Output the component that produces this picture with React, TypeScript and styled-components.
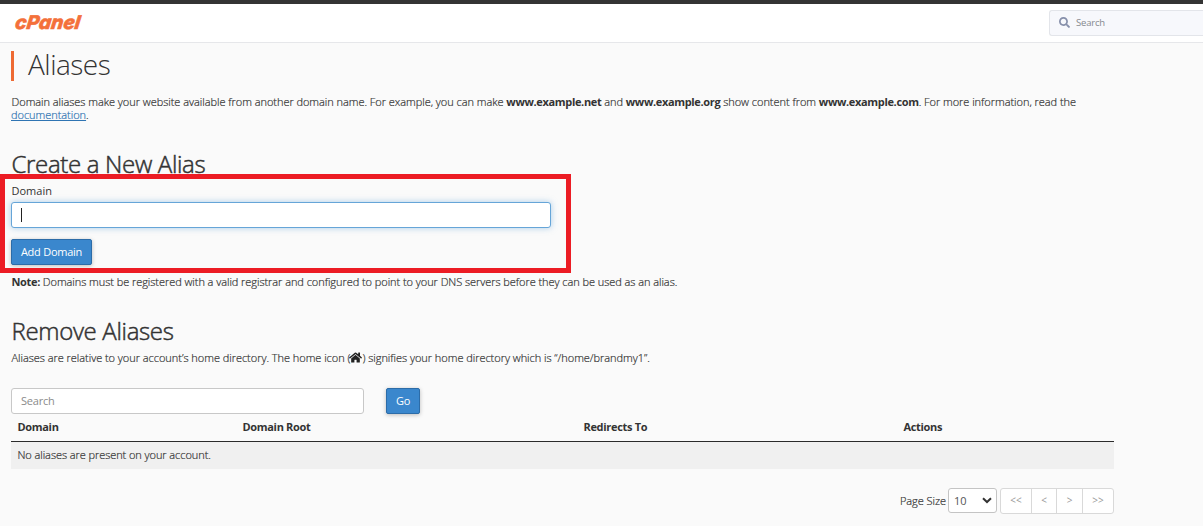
import React from "react";
import styled, { createGlobalStyle } from "styled-components";
import { FaSearch, FaHome } from "react-icons/fa";

const GlobalStyle = createGlobalStyle`
  * { box-sizing: border-box; }
  body {
    margin: 0;
    background: #fafafa;
    color: #333;
    font-family: "Open Sans", "Noto Sans", sans-serif;
    font-size: 11px;
    line-height: 13px;
    overflow: hidden;
  }
  b { font-weight: 700; letter-spacing: -0.34px; color: #333; -webkit-text-stroke: 0; }
`;

const Page = styled.div`
  width: 100%;
  height: 526px;
  overflow: hidden;
`;

const Header = styled.header`
  display: flex;
  justify-content: space-between;
  height: 43px;
  padding: 6px 0 0 14px;
  background: #fff;
  border-top: 4px solid #343434;
  border-bottom: 1px solid #e6e7ea;
`;

const Logo = styled.svg`
  display: block;
  width: 74px;
  height: 24px;
`;

const TopSearch = styled.div`
  display: flex;
  align-items: center;
  gap: 6px;
  width: 154px;
  height: 26px;
  padding: 0 0 1px 9px;
  border: 1px solid #e3e5ea;
  border-right: 0;
  border-radius: 3px 0 0 3px;
  background: #f7f8fc;
  color: #85888e;
  font-size: 9.5px;
  letter-spacing: -0.2px;
  svg { color: #8790ab; margin-top: -1px; }
`;

const Main = styled.main`
  display: flex;
  flex-direction: column;
  align-items: flex-start;
  padding: 8px 0 0 11px;
`;

const PageTitle = styled.h1`
  margin: 0 0 14px;
  padding-left: 14px;
  height: 30px;
  border-left: 3px solid #ee6a33;
  font-size: 28px;
  font-weight: 300;
  line-height: 27px;
  letter-spacing: -0.5px;
`;

const Heading = styled.h2`
  margin: 0;
  height: 30px;
  font-size: 24px;
  font-weight: 300;
  line-height: 30px;
  letter-spacing: -0.33px;
  text-indent: 0.5px;
  -webkit-text-stroke: 0.5px #333;
`;

const Text = styled.p`
  margin: 0;
  white-space: nowrap;
  font-weight: 300;
  letter-spacing: -0.04px;
  text-indent: 0.5px;
  color: #333;
  -webkit-text-stroke: 0.2px currentColor;
`;

const Intro = styled(Text)`
  margin-bottom: 28px;
`;

const Note = styled(Text)`
  margin-bottom: 28px;
  letter-spacing: -0.055px;
`;

const AliasesNote = styled(Text)`
  margin-top: 5px;
`;

const DocLink = styled.a`
  color: #2f74b3;
  text-decoration: underline;
`;

const AliasForm = styled.form`
  position: relative;
  display: flex;
  flex-direction: column;
  align-items: flex-start;
  padding-top: 5px;
  margin-bottom: 10px;
`;

const Highlight = styled.div`
  position: absolute;
  top: -5px;
  left: -11px;
  width: 571px;
  height: 99px;
  border: 5px solid #ec1c24;
  pointer-events: none;
`;

const Label = styled.label`
  margin-bottom: 5px;
  line-height: 13px;
  text-indent: 0.5px;
`;

const Field = styled.div<{ $width: number; $focused?: boolean }>`
  display: flex;
  align-items: center;
  width: ${(p) => p.$width}px;
  height: 26px;
  padding: 0 9px 1px;
  border: 1px solid ${(p) => (p.$focused ? "#66a5d8" : "#c8c8c8")};
  border-radius: 3px;
  background: #fff;
  box-shadow: ${(p) => (p.$focused ? "0 0 6px rgba(102, 165, 216, 0.55)" : "none")};
  color: #8b8b8b;
  letter-spacing: -0.2px;
`;

const Caret = styled.span`
  width: 1px;
  height: 14px;
  background: #222;
`;

const Button = styled.button<{ $width: number }>`
  width: ${(p) => p.$width}px;
  height: 26px;
  padding: 0 0 2px;
  border: 1px solid #2c6ca8;
  border-radius: 2px;
  background: #3a87cd;
  box-shadow: 0 1px 4px rgba(0, 0, 0, 0.25);
  color: #fff;
  font: 400 11px/13px "Open Sans", sans-serif;
  letter-spacing: -0.25px;
`;

const AddButton = styled(Button)`
  margin-top: 11px;
`;

const HomeIcon = styled(FaHome)`
  margin-left: -1px;
  vertical-align: -2px;
  color: #222;
`;

const SearchRow = styled.div`
  display: flex;
  gap: 22px;
  margin: 24px 0 0;
`;

const Columns = styled.div`
  display: grid;
  grid-template-columns: 225px 341px 320px 1fr;
  width: 1103px;
  height: 28px;
  padding: 6px 6px 0 6.5px;
  border-bottom: 1px solid #2b2b2b;
  font-weight: 700;
  letter-spacing: -0.32px;
`;

const EmptyRow = styled.div`
  display: flex;
  align-items: center;
  width: 1103px;
  height: 27px;
  padding: 0 6px 2px 6.5px;
  background: #f0f0f0;
  font-weight: 300;
  letter-spacing: -0.07px;
  -webkit-text-stroke: 0.2px currentColor;
`;

const Pager = styled.div`
  display: flex;
  align-items: flex-start;
  justify-content: flex-end;
  width: 1103px;
  margin-top: 19px;
`;

const PagerLabel = styled.span`
  margin-top: 6px;
  font-weight: 300;
  letter-spacing: -0.05px;
  -webkit-text-stroke: 0.2px currentColor;
`;

const SizeSelect = styled.div`
  display: flex;
  align-items: center;
  justify-content: space-between;
  width: 49px;
  height: 25px;
  margin: 0 3px 0 2px;
  padding: 0 4px 0 5px;
  border: 1px solid #c4c4c4;
  border-radius: 3px;
  background: #fff;
  color: #555;
`;

const PageButtons = styled.div`
  display: flex;
  border: 1px solid #d9d9d9;
  border-radius: 3px;
  background: #fff;
`;

const PageButton = styled.span<{ $width: number }>`
  width: ${(p) => p.$width}px;
  height: 24px;
  color: #999;
  font-size: 10px;
  line-height: 22px;
  text-align: center;
  & + & { border-left: 1px solid #d9d9d9; }
`;

export default function App() {
  return (
    <Page>
      <GlobalStyle />
      <Header>
        <Logo viewBox="0 0 74 24" aria-label="cPanel">
          <text
            transform="translate(0.5 19.2) skewX(-8)"
            fill="#f4703a"
            stroke="#f4703a"
            strokeWidth="0.6"
            fontFamily="Inter"
            fontStyle="italic"
            fontWeight="800"
            fontSize="19"
            textLength="65"
            lengthAdjust="spacingAndGlyphs"
          >
            cPanel
          </text>
        </Logo>
        <TopSearch>
          <FaSearch size={11} />
          Search
        </TopSearch>
      </Header>
      <Main>
        <PageTitle>Aliases</PageTitle>
        <Intro>
          Domain aliases make your website available from another domain name. For example, you can make{" "}
          <b>www.example.net</b> and <b>www.example.org</b> show content from <b>www.example.com</b>. For more
          information, read the
          <br />
          <DocLink>documentation</DocLink>.
        </Intro>
        <Heading>Create a New Alias</Heading>
        <AliasForm>
          <Label>Domain</Label>
          <Field $width={540} $focused>
            <Caret />
          </Field>
          <AddButton type="button" $width={81}>
            Add Domain
          </AddButton>
          <Highlight />
        </AliasForm>
        <Note>
          <b>Note:</b> Domains must be registered with a valid registrar and configured to point to your DNS servers
          before they can be used as an alias.
        </Note>
        <Heading>Remove Aliases</Heading>
        <AliasesNote>
          Aliases are relative to your account’s home directory. The home icon (<HomeIcon size={13} />) signifies your
          home directory which is “/home/brandmy1”.
        </AliasesNote>
        <SearchRow>
          <Field $width={353}>Search</Field>
          <Button type="button" $width={34}>
            Go
          </Button>
        </SearchRow>
        <Columns>
          <span>Domain</span>
          <span>Domain Root</span>
          <span>Redirects To</span>
          <span>Actions</span>
        </Columns>
        <EmptyRow>No aliases are present on your account.</EmptyRow>
        <Pager>
          <PagerLabel>Page Size</PagerLabel>
          <SizeSelect>
            10
            <svg width="10" height="7" viewBox="0 0 10 7">
              <path d="M1 1.2 L5 5 L9 1.2" fill="none" stroke="#333" strokeWidth="2" />
            </svg>
          </SizeSelect>
          <PageButtons>
            <PageButton $width={30}>&lt;&lt;</PageButton>
            <PageButton $width={25}>&lt;</PageButton>
            <PageButton $width={26}>&gt;</PageButton>
            <PageButton $width={31}>&gt;&gt;</PageButton>
          </PageButtons>
        </Pager>
      </Main>
    </Page>
  );
}
